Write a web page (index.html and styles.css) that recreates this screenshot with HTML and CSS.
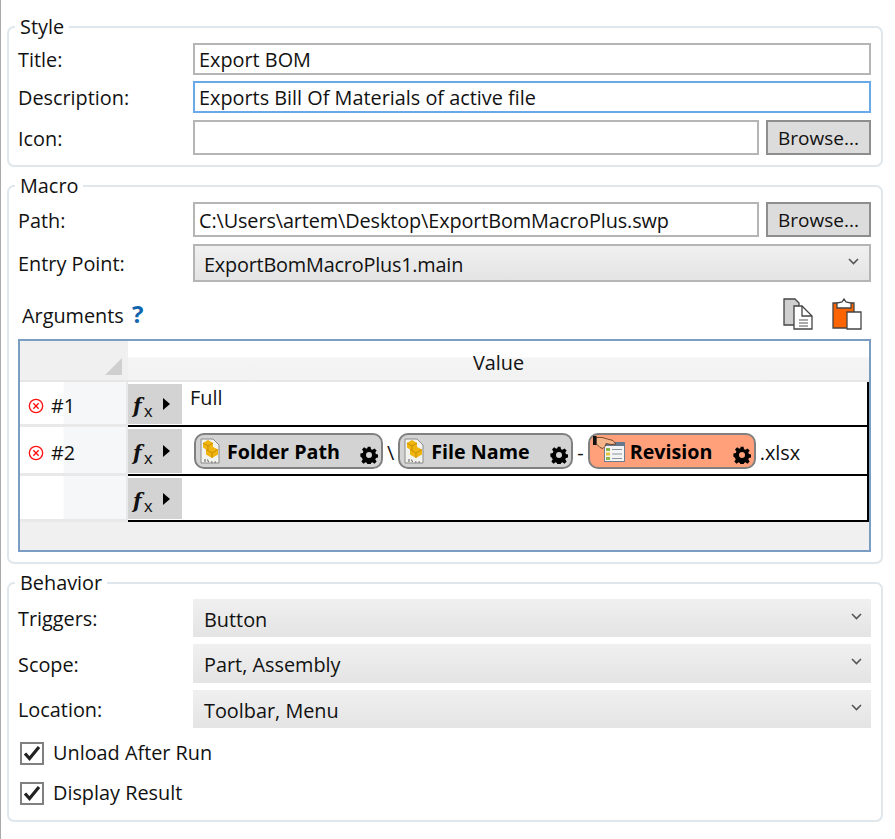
FILE: index.html
```html
<!DOCTYPE html>
<html lang="en">
<head>
    <meta charset="UTF-8">
    <title>Export BOM</title>
    <link rel="stylesheet" href="styles.css">
</head>
<body>
    <svg class="defs" width="0" height="0">
        <symbol id="gear" viewBox="0 0 24 24">
            <path fill-rule="evenodd" d="M10 1h4l.7 3.2 1.900.8 2.800-1.800 2.800 2.800-1.800 2.800.8 1.900 3.200.7v4l-3.200.7-.8 1.900 1.800 2.800-2.800 2.800-2.800-1.800-1.900.8-.7 3.200h-4l-.7-3.200-1.900-.8-2.800 1.800-2.800-2.800 1.800-2.800-.8-1.900L.5 14v-4l3.200-.7.8-1.900-1.800-2.800 2.800-2.800 2.800 1.800 1.900-.8zM12 8a4 4 0 1 0 0 8 4 4 0 0 0 0-8z"/>
        </symbol>
        <symbol id="brick" viewBox="0 0 20 26">
            <path d="M1 1h12l6 6v18H1z" fill="#f2f2ee" stroke="#8a8a8a" stroke-width="1"/>
            <path d="M8 2l5 3v4l5 2.500v5L12 20l-6-3.500v-5L3 9.500V5z" fill="#f0b40f"/>
            <path d="M3 5l5 3 5-3M8 8v4M6 11.500l6 3.500 6-3.500M12 15v5" fill="none" stroke="#c48a00" stroke-width=".9"/>
            <path d="M5 21v3M7.500 21.500l1 2.500M11 24h1.500M14.500 24H16" stroke="#555" stroke-width="1" fill="none"/>
        </symbol>
        <symbol id="form-hand" viewBox="0 0 32 26">
            <rect x="11.500" y="6.500" width="20" height="19" fill="#f4f4f4" stroke="#6c7d92"/>
            <rect x="11" y="6" width="21" height="4" fill="#67788e"/>
            <rect x="13" y="12" width="4" height="3" fill="#8db54a"/>
            <rect x="13" y="16.500" width="4" height="3" fill="#e4c23a"/>
            <rect x="13" y="21" width="4" height="3" fill="#8db54a"/>
            <path d="M19 13.500h10M19 18h10M19 22.500h10" stroke="#8a94a0"/>
            <path d="M3 1.500h6l11 3 3 3.500-5 .5-5-1-1 3-2 2-3-1-4-4z" fill="#f5b58a" stroke="#6b3d22" stroke-width=".9"/>
            <path d="M0 0h3.500v9H0z" fill="#111"/>
        </symbol>
    </svg>

    <div class="page">
        <!-- Style -->
        <fieldset class="group">
            <legend>Style</legend>
            <div class="row row-title">
                <label>Title:</label>
                <div class="field">Export BOM</div>
            </div>
            <div class="row row-title row-gap">
                <label>Description:</label>
                <div class="field field-focus">Exports Bill Of Materials of active file</div>
            </div>
            <div class="row row-browse">
                <label>Icon:</label>
                <div class="field"></div>
                <button class="browse">Browse...</button>
            </div>
        </fieldset>

        <!-- Macro -->
        <fieldset class="group">
            <legend>Macro</legend>
            <div class="row row-browse">
                <label>Path:</label>
                <div class="field field-path">C:\Users\artem\Desktop\ExportBomMacroPlus.swp</div>
                <button class="browse">Browse...</button>
            </div>
            <div class="row row-select">
                <label>Entry Point:</label>
                <div class="select select-border">
                    <span>ExportBomMacroPlus1.main</span>
                    <svg class="chevron" viewBox="0 0 11 7"><path d="M1 1l4.500 4.500L10 1" fill="none" stroke="#555" stroke-width="1.600"/></svg>
                </div>
            </div>

            <div class="args-bar">
                <div class="args-title">Arguments <span class="help">?</span></div>
                <div class="args-tools">
                    <svg class="tool" viewBox="0 0 30 32">
                        <path d="M1 1h11l4 4v22H1z" fill="#cfcfcf" stroke="#444" stroke-width="1.300"/>
                        <path d="M11 8h8l10 10v13H11z" fill="#fff" stroke="#444" stroke-width="1.300"/>
                        <path d="M19 8v10h10" fill="none" stroke="#444" stroke-width="1.300"/>
                        <path d="M16 22h9M16 25h9M16 28h9" stroke="#555" stroke-width="1.200"/>
                    </svg>
                    <svg class="tool" viewBox="0 0 30 32">
                        <path d="M1 5h21v25H1z" fill="#fb6400" stroke="#444" stroke-width="1.300"/>
                        <path d="M5 10V5l5-1 2-3 2 3 5 1v5z" fill="#fff" stroke="#444" stroke-width="1.300"/>
                        <path d="M15 14h14v17H15z" fill="#fff" stroke="#444" stroke-width="1.300"/>
                    </svg>
                </div>
            </div>

            <div class="grid">
                <div class="grid-head">
                    <div class="corner"></div>
                    <div class="col-title">Value</div>
                </div>

                <div class="grid-row grid-row-1">
                    <div class="row-head">
                        <svg class="remove" viewBox="0 0 18 18"><circle cx="9" cy="9" r="7.500" fill="none" stroke="#f11" stroke-width="1.500"/><path d="M6 6l6 6M12 6l-6 6" stroke="#f11" stroke-width="1.500"/></svg>
                        <span>#1</span>
                    </div>
                    <div class="cell">
                        <div class="fx"><span class="fx-f">f</span><span class="fx-x">x</span><span class="arrow"></span></div>
                        <div class="value value-top">Full</div>
                    </div>
                </div>

                <div class="grid-row grid-row-2">
                    <div class="row-head">
                        <svg class="remove" viewBox="0 0 18 18"><circle cx="9" cy="9" r="7.500" fill="none" stroke="#f11" stroke-width="1.500"/><path d="M6 6l6 6M12 6l-6 6" stroke="#f11" stroke-width="1.500"/></svg>
                        <span>#2</span>
                    </div>
                    <div class="cell">
                        <div class="fx"><span class="fx-f">f</span><span class="fx-x">x</span><span class="arrow"></span></div>
                        <div class="value value-chips">
                            <span class="chip chip-folder">
                                <svg class="chip-icon"><use href="#brick"/></svg>
                                <b>Folder Path</b>
                                <svg class="gear"><use href="#gear"/></svg>
                            </span>
                            <span class="sep">\</span>
                            <span class="chip chip-file">
                                <svg class="chip-icon"><use href="#brick"/></svg>
                                <b>File Name</b>
                                <svg class="gear"><use href="#gear"/></svg>
                            </span>
                            <span class="sep">-</span>
                            <span class="chip chip-rev">
                                <svg class="chip-icon-wide"><use href="#form-hand"/></svg>
                                <b>Revision</b>
                                <svg class="gear"><use href="#gear"/></svg>
                            </span>
                            <span class="sep">.xlsx</span>
                        </div>
                    </div>
                </div>

                <div class="grid-row grid-row-3">
                    <div class="row-head"></div>
                    <div class="cell">
                        <div class="fx"><span class="fx-f">f</span><span class="fx-x">x</span><span class="arrow"></span></div>
                        <div class="value"></div>
                    </div>
                </div>
            </div>
        </fieldset>

        <!-- Behavior -->
        <fieldset class="group">
            <legend>Behavior</legend>
            <div class="row row-select">
                <label>Triggers:</label>
                <div class="select"><span>Button</span><svg class="chevron" viewBox="0 0 11 7"><path d="M1 1l4.500 4.500L10 1" fill="none" stroke="#555" stroke-width="1.600"/></svg></div>
            </div>
            <div class="row row-select row-scope">
                <label>Scope:</label>
                <div class="select"><span>Part, Assembly</span><svg class="chevron" viewBox="0 0 11 7"><path d="M1 1l4.500 4.500L10 1" fill="none" stroke="#555" stroke-width="1.600"/></svg></div>
            </div>
            <div class="row row-select">
                <label>Location:</label>
                <div class="select"><span>Toolbar, Menu</span><svg class="chevron" viewBox="0 0 11 7"><path d="M1 1l4.500 4.500L10 1" fill="none" stroke="#555" stroke-width="1.600"/></svg></div>
            </div>
            <div class="check">
                <span class="box"><svg viewBox="0 0 18 18"><path d="M2 9.500l4.500 5L16 3" fill="none" stroke="#222" stroke-width="3.200"/></svg></span>
                <span class="check-text">Unload After Run</span>
            </div>
            <div class="check">
                <span class="box"><svg viewBox="0 0 18 18"><path d="M2 9.500l4.500 5L16 3" fill="none" stroke="#222" stroke-width="3.200"/></svg></span>
                <span class="check-text">Display Result</span>
            </div>
        </fieldset>
    </div>
</body>
</html>
```

FILE: styles.css
```css
/* Basic Reset */
* {
    margin: 0;
    padding: 0;
    box-sizing: border-box;
}

body {
    font-family: 'Open Sans', 'Noto Sans', sans-serif;
    font-size: 19.85px;
    color: #111;
    background-color: #fff;
}

.defs {
    display: block;
    height: 0;
}

.page {
    height: 839px;
    overflow: hidden;
    padding: 0 12px 0 6px;
    border-left: 1px solid #aaa;
}

/* Group boxes */
.group {
    border: 2px solid #dfe7ed;
    border-radius: 7px;
    padding: 4px 10px 10px 9px;
    margin-bottom: 7px;
    min-width: 0;
}

.group:first-child {
    margin-top: 15px;
}

.group legend {
    margin-left: -3px;
    padding: 0 5px;
    line-height: 24px;
}

/* Form rows */
.row {
    display: grid;
    grid-template-columns: 175px 1fr;
    align-items: center;
    margin-bottom: 7px;
}

.group > .row:last-child {
    margin-bottom: 0;
}

.row-gap {
    margin-bottom: 8px;
}

.row-title {
    height: 31px;
}

.row-browse {
    grid-template-columns: 175px 1fr 112px;
    height: 35px;
}

.row-select {
    height: 38px;
}

.row-scope {
    height: 39px;
}

.row label {
    white-space: nowrap;
    padding-top: 1px;
}

.field {
    height: 100%;
    border: 2px solid #b5b5b5;
    padding: 1px 0 0 4px;
    display: flex;
    align-items: center;
    background-color: #fff;
    white-space: nowrap;
}

.field-focus {
    border-color: #6aa9e9;
}

.field-path {
    letter-spacing: -0.11px;
}

.browse {
    height: 100%;
    margin-left: 7px;
    font: inherit;
    font-size: 19px;
    color: inherit;
    background-color: #dcdcdc;
    border: 2px solid #8e8e8e;
}

.select {
    height: 100%;
    display: flex;
    align-items: center;
    justify-content: space-between;
    padding: 0 9px 0 11px;
    background: linear-gradient(#f0f0f0, #e4e4e4);
}

.select span {
    padding-top: 2px;
}

.select-border {
    border: 2px solid #b5b5b5;
    padding-left: 9px;
    padding-right: 10px;
    letter-spacing: -0.2px;
}

.chevron {
    width: 11px;
    height: 7px;
    margin-bottom: 4px;
}

/* Arguments */
.args-bar {
    display: flex;
    justify-content: space-between;
    align-items: center;
    height: 50px;
    padding: 0 9px 0 4px;
}

.args-title {
    padding-top: 2px;
}

.help {
    color: #1265ad;
    font-weight: 700;
    font-size: 24px;
    line-height: 24px;
    margin-left: 3px;
}

.args-tools {
    display: flex;
    gap: 19px;
}

.tool {
    width: 30px;
    height: 32px;
    display: block;
}

.grid {
    border: 2px solid #7b9dc4;
    background-color: #f0f0f0;
    height: 213px;
    display: flex;
    flex-direction: column;
}

.grid-head {
    display: flex;
    height: 41px;
    flex-shrink: 0;
    border-bottom: 2px solid #e6e6e6;
}

.corner {
    width: 108px;
    position: relative;
}

.corner::after {
    content: "";
    position: absolute;
    right: 6px;
    bottom: 5px;
    border-style: solid;
    border-width: 0 0 17px 17px;
    border-color: transparent transparent #cfcfcf transparent;
}

.col-title {
    flex: 1;
    text-align: center;
    line-height: 24px;
    padding-top: 10px;
    background: linear-gradient(#fff 0, #fff 16px, #f4f4f4 17px, #f2f2f2 100%);
}

.grid-row {
    display: flex;
    background-color: #fff;
}

.grid-row-1 {
    height: 45px;
}

.grid-row-2 {
    height: 49px;
}

.grid-row-3 {
    height: 46px;
}

.row-head {
    width: 108px;
    display: flex;
    align-items: center;
    gap: 6px;
    padding: 6px 0 0 8px;
    border-bottom: 3px solid #e9e9e9;
    border-right: 2px solid #e9e9e9;
    background: linear-gradient(90deg, #fff 43px, #f6f7f9 44px, #f6f7f9 100%);
}

.row-head span {
    line-height: 24px;
}

.remove {
    width: 16px;
    height: 16px;
    margin: 0 1px 1px 0;
}

.cell {
    flex: 1;
    display: flex;
    min-width: 0;
    border-bottom: 2px solid #000;
    border-right: 2px solid #000;
    padding: 2px 0 1px;
}

.fx {
    width: 54px;
    margin-right: 8px;
    background-color: #d3d3d3;
    position: relative;
    flex-shrink: 0;
}

.fx-f {
    position: absolute;
    left: 5px;
    top: calc(50% - 12px);
    font-family: 'DejaVu Serif', serif;
    font-style: italic;
    font-weight: 700;
    font-size: 20px;
    line-height: 28px;
}

.fx-x {
    position: absolute;
    left: 16px;
    top: calc(50% - 3px);
    font-family: 'Liberation Sans', sans-serif;
    font-size: 17px;
    line-height: 22px;
}

.arrow {
    position: absolute;
    left: 35px;
    top: calc(50% - 6px);
    border-style: solid;
    border-width: 6px 0 6px 7px;
    border-color: transparent transparent transparent #000;
}

.value {
    flex: 1;
    display: flex;
    align-items: center;
    min-width: 0;
    white-space: nowrap;
}

.value-top {
    align-items: flex-start;
    line-height: 24px;
    padding-top: 2px;
}

.value-chips {
    padding-left: 4px;
}

.value .sep {
    margin: 0 4px;
    padding-top: 3px;
}

/* Token chips */
.chip {
    display: inline-flex;
    align-items: center;
    flex-shrink: 0;
    height: 36px;
    border: 2px solid #808080;
    border-radius: 10px;
    background-color: #d3d3d3;
    padding: 0 3px 0 4px;
}

.chip b {
    flex: 1;
    font-size: 19.7px;
    color: #000;
    margin-left: 7px;
}

.chip-folder {
    width: 189px;
}

.chip-file {
    width: 175px;
}

.chip-rev {
    width: 168px;
    background-color: #ffa07a;
}

.chip-icon {
    width: 20px;
    height: 26px;
}

.chip-icon-wide {
    width: 32px;
    height: 26px;
    margin-left: -1px;
    margin-top: -4px;
}

.chip-rev b {
    margin-left: 5px;
}

.gear {
    width: 18px;
    height: 18px;
    margin-top: 8px;
}

/* Checkboxes */
.check {
    display: flex;
    align-items: center;
    gap: 9px;
    height: 24px;
    margin: 13px 0 16px 2px;
}

.check:last-child {
    margin-bottom: 5px;
}

.check-text {
    margin-top: -1px;
}

.box {
    width: 24px;
    height: 23px;
    border: 2px solid #808080;
    background-color: #fff;
    display: flex;
    align-items: center;
    justify-content: center;
}

.box svg {
    width: 18px;
    height: 18px;
}
```
